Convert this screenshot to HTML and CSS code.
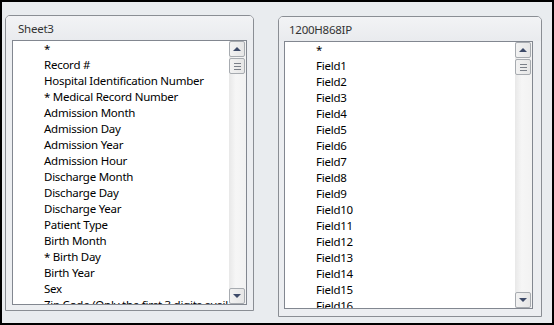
FILE: index.html
```html
<!DOCTYPE html>
<html>
<head>
  <title>Table fields</title>
  <link rel="stylesheet" href="styles.css">
</head>
<body>
  <div class="window">
    <div class="panel panel-left">
      <div class="panel-title">Sheet3</div>
      <div class="listbox">
        <ul class="items">
          <li>*</li>
          <li>Record #</li>
          <li>Hospital Identification Number</li>
          <li>* Medical Record Number</li>
          <li>Admission Month</li>
          <li>Admission Day</li>
          <li>Admission Year</li>
          <li>Admission Hour</li>
          <li>Discharge Month</li>
          <li>Discharge Day</li>
          <li>Discharge Year</li>
          <li>Patient Type</li>
          <li>Birth Month</li>
          <li>* Birth Day</li>
          <li>Birth Year</li>
          <li>Sex</li>
          <li>Zip Code  (Only the first 3 digits available)</li>
        </ul>
        <div class="scrollbar">
          <div class="sb-btn sb-up"></div>
          <div class="sb-thumb"><span></span><span></span><span></span></div>
          <div class="sb-track"></div>
          <div class="sb-btn sb-down"></div>
        </div>
      </div>
    </div>

    <div class="panel panel-right">
      <div class="panel-title">1200H868IP</div>
      <div class="listbox">
        <ul class="items">
          <li>*</li>
          <li>Field1</li>
          <li>Field2</li>
          <li>Field3</li>
          <li>Field4</li>
          <li>Field5</li>
          <li>Field6</li>
          <li>Field7</li>
          <li>Field8</li>
          <li>Field9</li>
          <li>Field10</li>
          <li>Field11</li>
          <li>Field12</li>
          <li>Field13</li>
          <li>Field14</li>
          <li>Field15</li>
          <li>Field16</li>
        </ul>
        <div class="scrollbar">
          <div class="sb-btn sb-up"></div>
          <div class="sb-thumb"><span></span><span></span><span></span></div>
          <div class="sb-track"></div>
          <div class="sb-btn sb-down"></div>
        </div>
      </div>
    </div>
  </div>
</body>
</html>
```

FILE: styles.css
```css
*, *::before, *::after {
  box-sizing: border-box;
}

body {
  margin: 0;
  padding: 0;
  font-family: "Noto Sans", "Open Sans", sans-serif;
  font-size: 11.5px;
  letter-spacing: -0.25px;
  color: #000;
}

.window {
  width: 554px;
  height: 325px;
  border: 2px solid #000;
  background: #e9ecef;
  display: flex;
  align-items: flex-start;
  gap: 24px;
  padding: 13px 0 0 3px;
}

.panel {
  display: flex;
  flex-direction: column;
  border: 1px solid #8a8e94;
  border-radius: 5px 5px 0 0;
  background: #eceef1;
}

.panel-left {
  width: 249px;
  height: 296px;
  padding: 0 6px 5px 6px;
}

.panel-right {
  width: 264px;
  height: 301px;
  margin-top: 1px;
  padding: 0 8px 7px 5px;
}

.panel-title {
  height: 24px;
  margin: 0 -6px;
  padding: 6px 0 0 12px;
  line-height: 14px;
  color: #333;
  background: linear-gradient(#f2f3f5, #e9ebee);
  border-radius: 4px 4px 0 0;
}

.panel-right .panel-title {
  margin: 0 -8px 0 -5px;
  padding-left: 10px;
}

.listbox {
  flex: 1;
  display: flex;
  border: 1px solid #828790;
  background: #fff;
  overflow: hidden;
}

.items {
  flex: 1;
  list-style: none;
  margin: 0;
  padding: 0 0 0 31px;
  overflow: hidden;
  white-space: nowrap;
}

.items li {
  height: 16px;
  line-height: 16px;
}

.scrollbar {
  width: 17px;
  display: flex;
  flex-direction: column;
  background: linear-gradient(90deg, #e8e8e8, #f6f6f6 40%, #f2f2f2);
  padding: 0 1px 0 0;
}

.sb-btn,
.sb-thumb {
  height: 16px;
  border: 1px solid #a7abb0;
  border-radius: 2px;
  background: linear-gradient(90deg, #f2f2f2, #e6e6e6);
  display: flex;
  align-items: center;
  justify-content: center;
}

.sb-thumb {
  margin-top: 1px;
  flex-direction: column;
  gap: 2px;
}

.sb-thumb span {
  width: 7px;
  height: 1px;
  background: #7a7f88;
}

.sb-track {
  flex: 1;
}

.sb-btn::after {
  content: "";
  border-left: 4px solid transparent;
  border-right: 4px solid transparent;
}

.sb-up::after {
  border-bottom: 4px solid #3d4a68;
}

.sb-down::after {
  border-top: 4px solid #3d4a68;
}
```
